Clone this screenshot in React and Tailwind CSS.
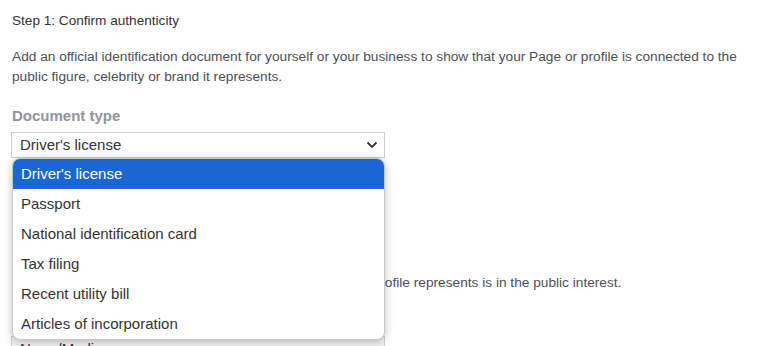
import React from 'react';

const DOCUMENT_TYPES = [
  "Driver's license",
  'Passport',
  'National identification card',
  'Tax filing',
  'Recent utility bill',
  'Articles of incorporation',
];

function Chevron() {
  return (
    <svg width="12" height="8" viewBox="0 0 12 8" fill="none" className="text-[#333]">
      <path d="M1.5 1.5L6 6l4.5-4.5" stroke="currentColor" strokeWidth="1.8" />
    </svg>
  );
}

export default function App() {
  const selected = "Driver's license";

  return (
    <div className="min-h-[346px] bg-white px-3 pt-[12px] text-[#444] [font-family:'Liberation_Sans',Arial,sans-serif]">
      <p className="text-[13.6px] leading-[18px] text-[#333]">Step 1: Confirm authenticity</p>
      <p className="mt-[17px] text-[13.7px] leading-[20px] text-[#4b4f56]">
        Add an official identification document for yourself or your business to show that your Page or profile is connected to the public figure, celebrity or brand it represents.
      </p>

      <p className="mt-[20px] text-[15px] font-bold leading-[18px] text-[#90949c]">Document type</p>

      <div className="relative mt-[7px] w-[374px] -ml-px">
        <div className="flex h-[26px] items-center justify-between border border-[#ccd0d5] bg-white pl-[8px] pr-[6px] text-[15px] text-[#333]">
          <span>{selected}</span>
          <Chevron />
        </div>

        <ul className="absolute left-px top-[26px] z-10 w-[373px] overflow-hidden rounded-[8px] border border-[#c8c8c8] bg-white shadow-[0_2px_8px_rgba(0,0,0,0.25)]">
          {DOCUMENT_TYPES.map((type) => (
            <li
              key={type}
              className={
                type === selected
                  ? 'flex h-[30px] items-center bg-[#1a66d2] pl-[8px] text-[15px] text-white'
                  : 'flex h-[30px] items-center pl-[8px] text-[15px] text-[#333]'
              }
            >
              {type}
            </li>
          ))}
        </ul>
      </div>

      <div className="mt-[40px] h-[24px] w-[80px] rounded-[3px] border border-[#555] bg-[#f0f0f0]" />

      <p className="mt-[22px] text-[15px] font-bold leading-[18px] text-[#90949c]">Step 2: Confirm notability</p>
      <p className="mt-[11px] text-[13.7px] leading-[20px] text-[#4b4f56]">
        Show that the public figure, celebrity or brand your Page or profile represents is in the public interest.
      </p>

      <p className="mt-[18px] text-[15px] font-bold leading-[18px] text-[#90949c]">Category</p>
      <div className="mt-[7px] flex h-[26px] w-[374px] -ml-px items-center border border-[#ccd0d5] bg-[#f2f2f2] pl-[8px] text-[15px] text-[#333]">
        News/Media
      </div>
    </div>
  );
}
